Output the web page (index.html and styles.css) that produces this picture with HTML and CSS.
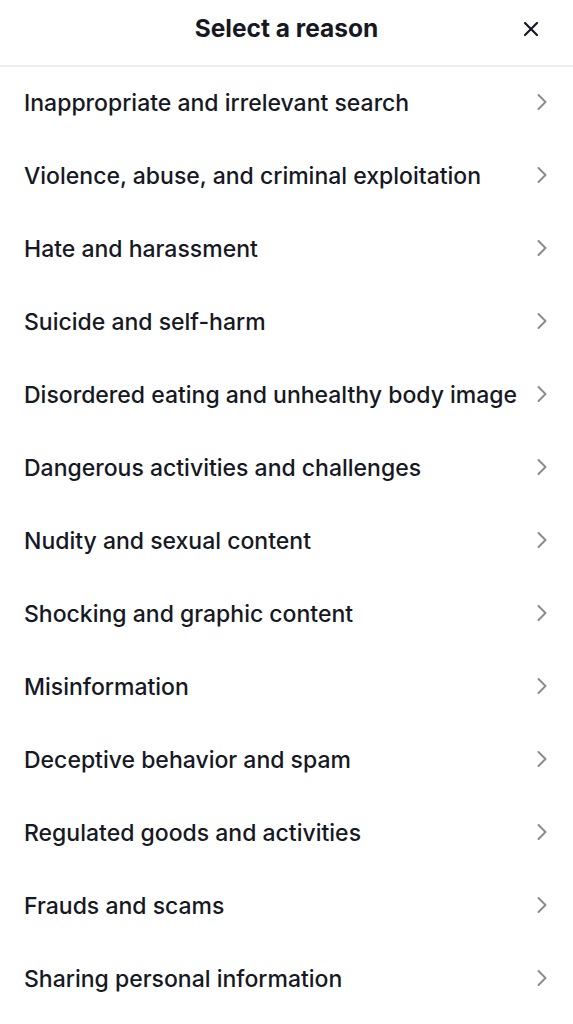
FILE: index.html
```html
<!DOCTYPE html>
<html>
<head>
<meta charset="utf-8">
<link rel="stylesheet" href="styles.css">
</head>
<body>
<div class="sheet">
  <header class="header">
    <h1 class="title">Select a reason</h1>
    <button class="close" aria-label="Close">
      <svg width="16" height="16" viewBox="0 0 16 16"><path d="M2 2L14 14M14 2L2 14" stroke="#161823" stroke-width="2.2" stroke-linecap="round"/></svg>
    </button>
  </header>
  <ul class="list">
    <li class="row"><span class="label">Inappropriate and irrelevant search</span><svg class="chev" width="12" height="18" viewBox="0 0 12 18"><path d="M2.5 2L9.5 9L2.5 16" fill="none" stroke="#8a8b91" stroke-width="2" stroke-linecap="round" stroke-linejoin="round"/></svg></li>
    <li class="row"><span class="label">Violence, abuse, and criminal exploitation</span><svg class="chev" width="12" height="18" viewBox="0 0 12 18"><path d="M2.5 2L9.5 9L2.5 16" fill="none" stroke="#8a8b91" stroke-width="2" stroke-linecap="round" stroke-linejoin="round"/></svg></li>
    <li class="row"><span class="label">Hate and harassment</span><svg class="chev" width="12" height="18" viewBox="0 0 12 18"><path d="M2.5 2L9.5 9L2.5 16" fill="none" stroke="#8a8b91" stroke-width="2" stroke-linecap="round" stroke-linejoin="round"/></svg></li>
    <li class="row"><span class="label">Suicide and self-harm</span><svg class="chev" width="12" height="18" viewBox="0 0 12 18"><path d="M2.5 2L9.5 9L2.5 16" fill="none" stroke="#8a8b91" stroke-width="2" stroke-linecap="round" stroke-linejoin="round"/></svg></li>
    <li class="row"><span class="label">Disordered eating and unhealthy body image</span><svg class="chev" width="12" height="18" viewBox="0 0 12 18"><path d="M2.5 2L9.5 9L2.5 16" fill="none" stroke="#8a8b91" stroke-width="2" stroke-linecap="round" stroke-linejoin="round"/></svg></li>
    <li class="row"><span class="label">Dangerous activities and challenges</span><svg class="chev" width="12" height="18" viewBox="0 0 12 18"><path d="M2.5 2L9.5 9L2.5 16" fill="none" stroke="#8a8b91" stroke-width="2" stroke-linecap="round" stroke-linejoin="round"/></svg></li>
    <li class="row"><span class="label">Nudity and sexual content</span><svg class="chev" width="12" height="18" viewBox="0 0 12 18"><path d="M2.5 2L9.5 9L2.5 16" fill="none" stroke="#8a8b91" stroke-width="2" stroke-linecap="round" stroke-linejoin="round"/></svg></li>
    <li class="row"><span class="label">Shocking and graphic content</span><svg class="chev" width="12" height="18" viewBox="0 0 12 18"><path d="M2.5 2L9.5 9L2.5 16" fill="none" stroke="#8a8b91" stroke-width="2" stroke-linecap="round" stroke-linejoin="round"/></svg></li>
    <li class="row"><span class="label">Misinformation</span><svg class="chev" width="12" height="18" viewBox="0 0 12 18"><path d="M2.5 2L9.5 9L2.5 16" fill="none" stroke="#8a8b91" stroke-width="2" stroke-linecap="round" stroke-linejoin="round"/></svg></li>
    <li class="row"><span class="label">Deceptive behavior and spam</span><svg class="chev" width="12" height="18" viewBox="0 0 12 18"><path d="M2.5 2L9.5 9L2.5 16" fill="none" stroke="#8a8b91" stroke-width="2" stroke-linecap="round" stroke-linejoin="round"/></svg></li>
    <li class="row"><span class="label">Regulated goods and activities</span><svg class="chev" width="12" height="18" viewBox="0 0 12 18"><path d="M2.5 2L9.5 9L2.5 16" fill="none" stroke="#8a8b91" stroke-width="2" stroke-linecap="round" stroke-linejoin="round"/></svg></li>
    <li class="row"><span class="label">Frauds and scams</span><svg class="chev" width="12" height="18" viewBox="0 0 12 18"><path d="M2.5 2L9.5 9L2.5 16" fill="none" stroke="#8a8b91" stroke-width="2" stroke-linecap="round" stroke-linejoin="round"/></svg></li>
    <li class="row"><span class="label">Sharing personal information</span><svg class="chev" width="12" height="18" viewBox="0 0 12 18"><path d="M2.5 2L9.5 9L2.5 16" fill="none" stroke="#8a8b91" stroke-width="2" stroke-linecap="round" stroke-linejoin="round"/></svg></li>
  </ul>
</div>
</body>
</html>
```

FILE: styles.css
```css
html, body {
  margin: 0;
  padding: 0;
  background: #ffffff;
}
body {
  font-family: Inter, "Liberation Sans", sans-serif;
  color: #161823;
}
.sheet {
  width: 573px;
  height: 1024px;
  overflow: hidden;
  background: #ffffff;
}
.header {
  height: 65px;
  border-bottom: 2px solid #efeff0;
  display: flex;
  align-items: center;
  justify-content: center;
  position: relative;
}
.title {
  margin: 0;
  font-size: 24.5px;
  font-weight: 700;
  letter-spacing: 0;
  padding-bottom: 10px;
}
.close {
  position: absolute;
  right: 32px;
  top: 19px;
  width: 20px;
  height: 20px;
  padding: 0;
  border: 0;
  background: none;
  display: flex;
  align-items: center;
  justify-content: center;
}
.list {
  list-style: none;
  margin: 0;
  padding: 0;
}
.row {
  height: 73px;
  display: flex;
  align-items: center;
  justify-content: space-between;
  padding: 0 24px 0 24px;
}
.label {
  font-size: 23px;
  font-weight: 500;
  margin-top: -2px;
  white-space: nowrap;
}
.chev {
  flex: none;
  margin-right: 1px;
  margin-top: -4px;
}
```
